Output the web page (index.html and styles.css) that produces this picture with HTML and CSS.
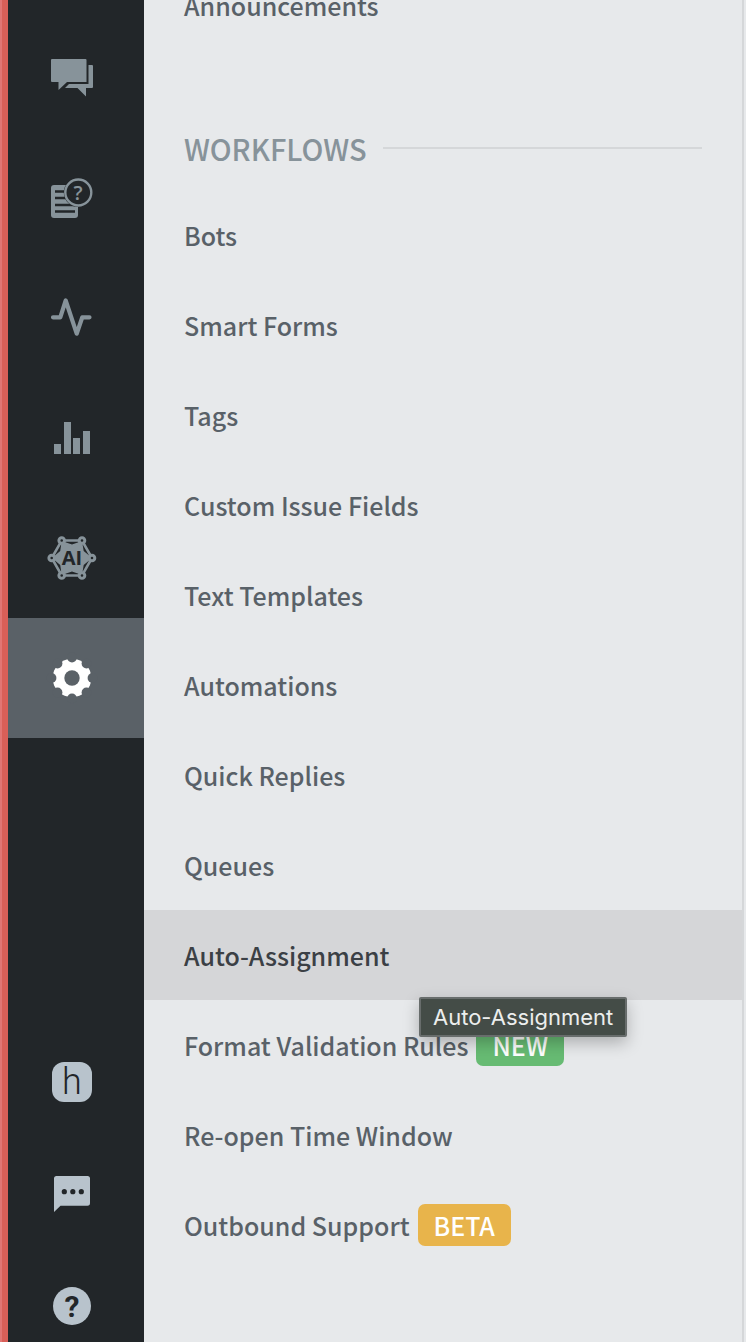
FILE: index.html
```html
<!DOCTYPE html>
<html lang="en">
<head>
<meta charset="utf-8">
<meta name="viewport" content="width=device-width, initial-scale=1">
<title>Settings</title>
<link rel="stylesheet" href="styles.css">
</head>
<body>
<div class="shell">
  <nav class="rail" aria-label="Main">
    <div class="rail-top">
      <a class="rail-item" href="#issues" aria-label="Issues">
        <svg class="icon" viewBox="0 0 48 48"><path d="M4 5H37.500Q38.500 5 38.500 6V28H19L10.500 36V28H4Q3 28 3 27V6Q3 5 4 5Z"/><path d="M40.500 11H44Q45 11 45 12V33Q45 34 44 34H38V42.500L29.500 34H17L21 30H40.500Z"/></svg>
      </a>
      <a class="rail-item" href="#faqs" aria-label="FAQs">
        <svg class="icon" viewBox="0 0 48 48"><rect x="3" y="11" width="27" height="33" rx="3"/><path class="rail-line" d="M7 17.500H27M7 24H27M7 31H27M7 37.500H27" stroke-width="2.400"/><circle class="rail-fill" cx="30.300" cy="18.500" r="14.500"/><circle class="line" cx="30.300" cy="18.500" r="13" stroke-width="2.400"/><text class="faq-mark" x="30" y="26">?</text></svg>
      </a>
      <a class="rail-item" href="#activity" aria-label="Activity">
        <svg class="icon" viewBox="0 0 48 48"><path class="line" d="M5 23.300H12.300L17.700 6.500L28.700 39.700L34.300 23.300H41.500" stroke-width="4.200" stroke-linecap="round" stroke-linejoin="round"/></svg>
      </a>
      <a class="rail-item" href="#analytics" aria-label="Analytics">
        <svg class="icon" viewBox="0 0 48 48"><path d="M6 30h7v10H6zM16 8h7v32h-7zM25 24h7v16h-7zM35 17h7v23h-7z"/></svg>
      </a>
      <a class="rail-item" href="#ai" aria-label="AI">
        <svg class="icon" viewBox="0 0 48 48"><path class="line" d="M13.700 6.500H34L44 24L34 41.500H13.700L3.700 24Z" stroke-width="2.600"/><path d="M13.700 7L24 10.500L34 7L35.700 17L44 24L35.700 31L34 41L24 37.500L13.700 41L12.200 31L4 24L12.200 17Z"/><g class="node"><circle cx="13.700" cy="6.500" r="2.800"/><circle cx="34" cy="6.500" r="2.800"/><circle cx="44" cy="24" r="2.800"/><circle cx="34" cy="41.500" r="2.800"/><circle cx="13.700" cy="41.500" r="2.800"/><circle cx="3.700" cy="24" r="2.800"/></g><text class="ai-mark" x="24" y="30.500">AI</text></svg>
      </a>
      <a class="rail-item rail-item-active" href="#settings" aria-label="Settings" aria-current="page">
        <svg class="icon" viewBox="0 0 48 48"><circle cx="24" cy="24" r="19.300"/><g class="gear-cut"><circle cx="24" cy="24" r="7.700"/><circle cx="24" cy="3.500" r="4.900"/><circle cx="38.500" cy="9.500" r="4.900"/><circle cx="44.500" cy="24" r="4.900"/><circle cx="38.500" cy="38.500" r="4.900"/><circle cx="24" cy="44.500" r="4.900"/><circle cx="9.500" cy="38.500" r="4.900"/><circle cx="3.500" cy="24" r="4.900"/><circle cx="9.500" cy="9.500" r="4.900"/></g></svg>
      </a>
    </div>
    <div class="rail-bottom">
      <button class="rail-button" type="button" aria-label="Product home">
        <svg class="icon" viewBox="0 0 48 48"><rect x="4" y="4" width="40" height="40" rx="12"/><text class="home-mark" x="24" y="36">h</text></svg>
      </button>
      <button class="rail-button" type="button" aria-label="Messages">
        <svg class="icon" viewBox="0 0 48 48"><path d="M8.500 6H39.500Q42 6 42 8.500V33Q42 35.700 39.500 35.700H12.500L6 42V8.500Q6 6 8.500 6Z"/><g class="rail-fill"><circle cx="16.300" cy="21.700" r="2.600"/><circle cx="24.800" cy="21.700" r="2.600"/><circle cx="33.300" cy="21.700" r="2.600"/></g></svg>
      </button>
      <button class="rail-button" type="button" aria-label="Help">
        <svg class="icon" viewBox="0 0 48 48"><circle cx="24" cy="24" r="19"/><text class="help-mark" x="24" y="35">?</text></svg>
      </button>
    </div>
  </nav>
  <main class="panel">
    <ul class="menu menu-scrolled">
      <li class="menu-item"><a class="menu-link" href="#announcements">Announcements</a></li>
    </ul>
    <h2 class="group-title">WORKFLOWS</h2>
    <ul class="menu">
      <li class="menu-item"><a class="menu-link" href="#bots">Bots</a></li>
      <li class="menu-item"><a class="menu-link" href="#smart-forms">Smart Forms</a></li>
      <li class="menu-item"><a class="menu-link" href="#tags">Tags</a></li>
      <li class="menu-item"><a class="menu-link" href="#custom-issue-fields">Custom Issue Fields</a></li>
      <li class="menu-item"><a class="menu-link" href="#text-templates">Text Templates</a></li>
      <li class="menu-item"><a class="menu-link" href="#automations">Automations</a></li>
      <li class="menu-item"><a class="menu-link" href="#quick-replies">Quick Replies</a></li>
      <li class="menu-item"><a class="menu-link" href="#queues">Queues</a></li>
      <li class="menu-item"><a class="menu-link menu-link-active" href="#auto-assignment" aria-describedby="auto-tip">Auto-Assignment</a><span class="tooltip" id="auto-tip" role="tooltip">Auto-Assignment</span></li>
      <li class="menu-item"><a class="menu-link" href="#format-validation">Format Validation Rules <span class="badge badge-new">NEW</span></a></li>
      <li class="menu-item"><a class="menu-link" href="#reopen">Re-open Time Window</a></li>
      <li class="menu-item"><a class="menu-link" href="#outbound">Outbound Support <span class="badge badge-beta">BETA</span></a></li>
    </ul>
  </main>
</div>
</body>
</html>
```

FILE: styles.css
```css
:root {
  --rail: #222629;
  --rail-active: #5a6167;
  --icon: #87939a;
  --icon-light: #b8c3cc;
  --panel: #e7e9eb;
  --line: #d5d7d9;
  --text: #596168;
}

* {
  box-sizing: border-box;
}

body {
  margin: 0;
  background: var(--panel);
  font-family: "Noto Sans CJK SC", "Noto Sans", sans-serif;
}

.shell {
  display: flex;
  min-height: 100vh;
}

.rail {
  display: flex;
  flex-direction: column;
  justify-content: space-between;
  flex: 0 0 144px;
  position: relative;
  padding-top: 18px;
  border-left: 8px solid #d95f58;
  background: var(--rail);
}

/* Lighter outer edge of the red strip */
.rail::before {
  content: "";
  position: absolute;
  top: 0;
  bottom: 0;
  left: -8px;
  width: 2px;
  background: #e17674;
}

.rail-top,
.rail-bottom {
  display: flex;
  flex-direction: column;
}

.rail-bottom {
  gap: 40px;
}

.rail-item,
.rail-button {
  display: flex;
  align-items: center;
  justify-content: center;
  padding: 0 8px 0 0;
  border: 0;
  background: none;
}

.rail-item {
  height: 120px;
  color: var(--icon);
}

.rail-item-active {
  background: var(--rail-active);
  color: #fff;
}

.rail-button {
  height: 72px;
  color: var(--icon-light);
}

.icon {
  width: 48px;
  height: 48px;
  fill: currentColor;
  overflow: visible;
}

.icon .line {
  fill: none;
  stroke: currentColor;
}

.icon .rail-line {
  fill: none;
  stroke: var(--rail);
}

.icon .rail-fill {
  fill: var(--rail);
}

.icon .gear-cut {
  fill: var(--rail-active);
}

.icon .node {
  fill: var(--rail);
  stroke: currentColor;
  stroke-width: 3px;
}

.icon text {
  text-anchor: middle;
}

.faq-mark {
  font: 600 20px "Open Sans", sans-serif;
}

.ai-mark {
  fill: var(--rail);
  font: 700 20px "Open Sans", sans-serif;
}

.home-mark {
  fill: var(--rail);
  font: 300 36px Roboto, sans-serif;
}

.help-mark {
  fill: var(--rail);
  font: 700 30px Roboto, sans-serif;
}

.panel {
  flex: 1;
  min-width: 0;
  margin-right: 2px;
  border-right: 2px solid var(--line);
}

.menu {
  margin: 0;
  padding: 0;
  list-style: none;
}

.menu-scrolled {
  margin-top: -40px;
}

.menu-item {
  position: relative;
}

.menu-link {
  display: flex;
  align-items: center;
  gap: 8px;
  height: 90px;
  padding: 0 40px;
  color: var(--text);
  font-size: 25px;
  font-weight: 500;
  line-height: 42px;
  text-decoration: none;
  white-space: nowrap;
}

.menu-link-active {
  background: #d5d6d8;
  color: #3b4045;
}

.group-title {
  display: flex;
  align-items: center;
  gap: 16px;
  margin: 0;
  padding: 76px 40px 20px;
  color: #87939a;
  font-size: 29px;
  font-weight: 500;
  line-height: 44px;
}

.group-title::after {
  content: "";
  flex: 1;
  height: 2px;
  background: var(--line);
}

.badge {
  padding: 0 16px;
  border-radius: 7px;
  color: #fff;
}

.badge-new {
  background: #67bb73;
}

.badge-beta {
  background: #e8b44b;
}

.tooltip {
  position: absolute;
  z-index: 1;
  top: 87px;
  left: 275px;
  padding: 0 12px;
  border: 2px solid #686d6c;
  border-radius: 2px;
  background: #444c47;
  box-shadow: 0 6px 16px rgba(0, 0, 0, 0.25);
  color: #eceeed;
  font: 400 22px/36px Inter, sans-serif;
  white-space: nowrap;
}
```
